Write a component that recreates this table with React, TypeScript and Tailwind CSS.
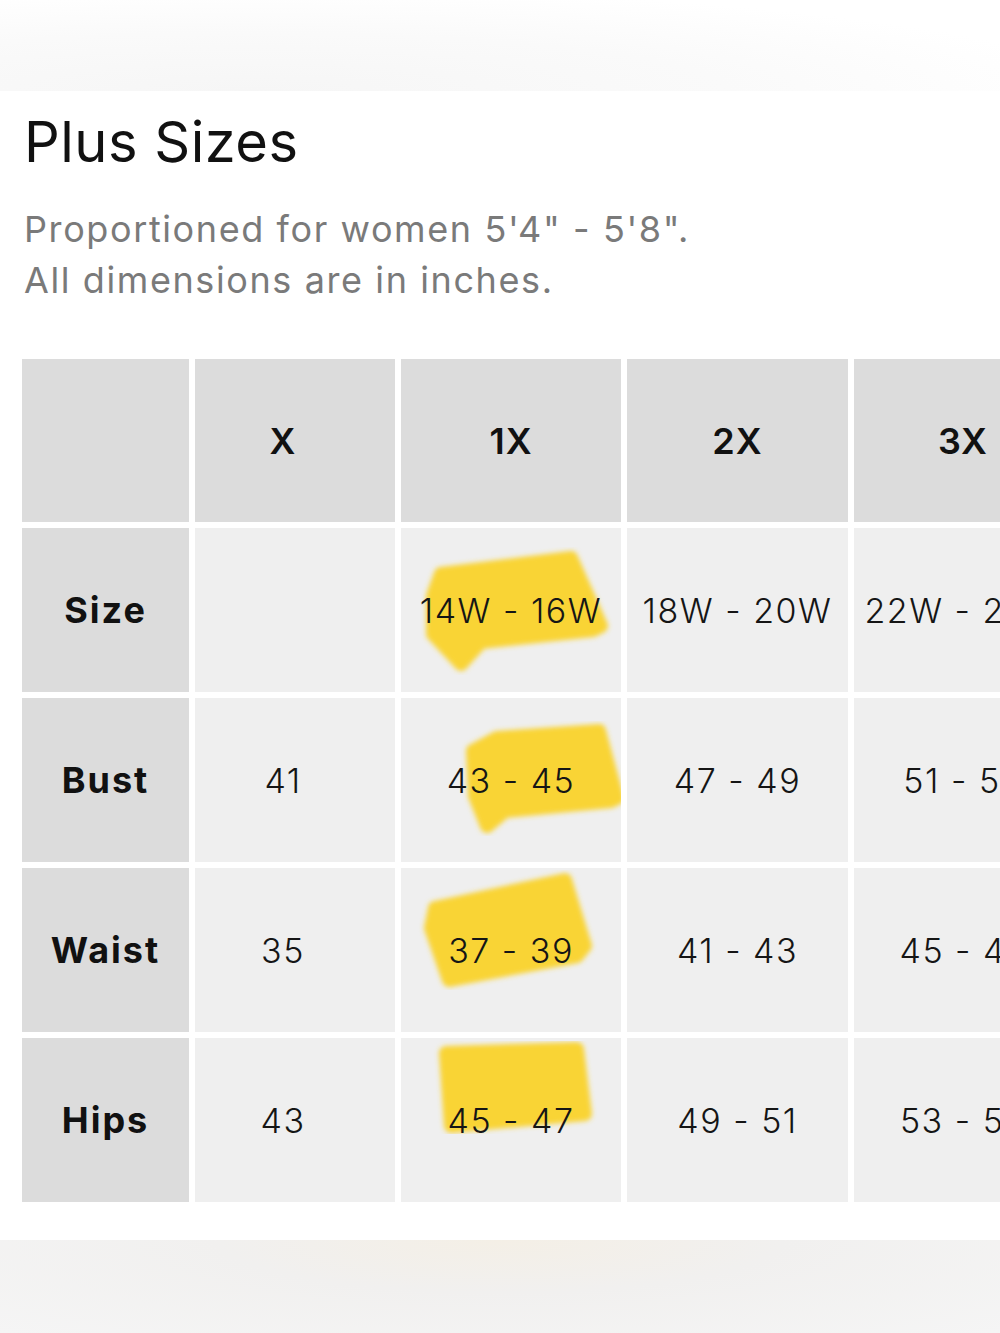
const columns = ["X", "1X", "2X", "3X"]

const rows = [
  { label: "Size", values: ["", "14W - 16W", "18W - 20W", "22W - 24W"] },
  { label: "Bust", values: ["41", "43 - 45", "47 - 49", "51 - 53"] },
  { label: "Waist", values: ["35", "37 - 39", "41 - 43", "45 - 47"] },
  { label: "Hips", values: ["43", "45 - 47", "49 - 51", "53 - 55"] },
]

// highlighter marks, in cell coordinates (1X column, 220 x 164)
const marks: Record<string, string> = {
  Size: "40,46 170,30 200,98 192,102 80,114 60,136 32,106 32,68",
  Bust: "72,53 96,40 198,33 216,100 210,103 104,113 86,128 74,98",
  Waist: "34,40 164,12 184,78 176,88 48,112 30,60",
  Hips: "45,15 176,11 184,76 50,88",
}

const Highlight = ({ id, points }: { id: string; points: string }) => (
  <svg
    className="absolute inset-0 w-full h-full pointer-events-none"
    viewBox="0 0 220 164"
    preserveAspectRatio="none"
  >
    <defs>
      <filter id={id} x="-10%" y="-10%" width="120%" height="120%">
        <feGaussianBlur stdDeviation="2.6" />
      </filter>
    </defs>
    <polygon
      points={points}
      fill="#f9d436"
      stroke="#f9d436"
      strokeWidth="14"
      strokeLinejoin="round"
      filter={`url(#${id})`}
    />
  </svg>
)

export default function App() {
  return (
    <div className="w-[1000px] h-[1333px] overflow-hidden bg-white flex flex-col font-['Inter','Noto_Sans',sans-serif]">
      <div className="h-[91px] shrink-0 bg-[radial-gradient(ellipse_at_25%_100%,#f6f6f6_0%,#fafafa_45%,#ffffff_80%)]" />

      <div className="pl-6 pt-[19px]">
        <h1 className="text-[56px] leading-[64px] text-[#111] font-normal tracking-[0.5px]">Plus Sizes</h1>
        <p className="mt-[30px] text-[36px] leading-[51px] text-[#7a7a7a] tracking-[1.6px]">
          Proportioned for women 5'4" - 5'8".
          <br />
          All dimensions are in inches.
        </p>
      </div>

      <div className="pl-[22px] mt-[53px]">
        <div className="grid grid-cols-[167px_200px_220px_221px_218px] grid-rows-[163px_164px_164px_164px_164px] gap-[6px] w-max">
          <div className="bg-[#dcdcdc]" />
          {columns.map((c, i) => (
            <div
              key={c}
              className={`bg-[#dcdcdc] flex items-center justify-center text-[36px] font-semibold text-[#111] tracking-[1px] ${i === 0 ? "pr-[24px]" : ""}`}
            >
              {c}
            </div>
          ))}
          {rows.map((row) => (
            <>
              <div key={row.label} className="bg-[#dcdcdc] flex items-center justify-center text-[36px] font-bold text-[#111] tracking-[2px]">
                {row.label}
              </div>
              {row.values.map((v, i) => (
                <div
                  key={row.label + i}
                  className={`relative bg-[#efefef] flex items-center justify-center text-[34px] font-light text-[#151515] tracking-[1.5px] whitespace-nowrap ${i === 0 ? "pr-[24px]" : ""}`}
                >
                  {i === 1 && <Highlight id={"hl-" + row.label} points={marks[row.label]} />}
                  <span className="relative">{v}</span>
                </div>
              ))}
            </>
          ))}
        </div>
      </div>

      <div className="mt-auto h-[93px] shrink-0 bg-[radial-gradient(ellipse_at_50%_0%,#f4efe6_0%,#f1f0ef_40%,#f5f5f5_100%)]" />
    </div>
  )
}
